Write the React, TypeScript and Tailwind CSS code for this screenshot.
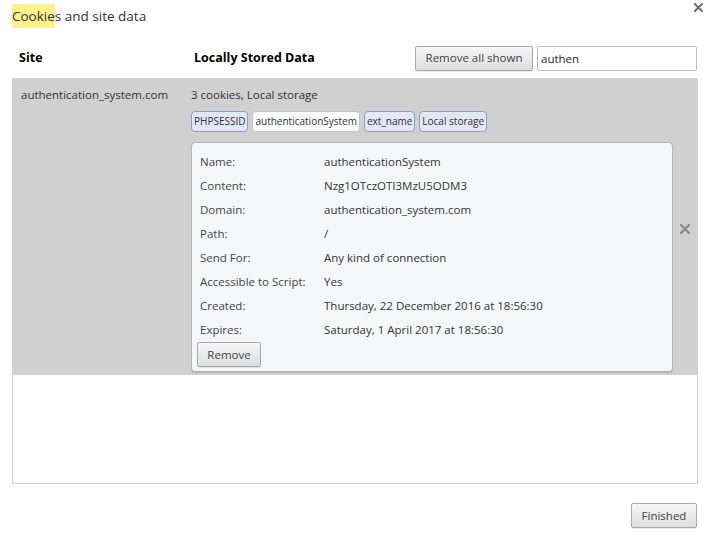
import React from 'react';

const FONT = { fontFamily: '"Open Sans", "Noto Sans", sans-serif' };

const chips = [
    { label: 'PHPSESSID', active: false },
    { label: 'authenticationSystem', active: true },
    { label: 'ext_name', active: false },
    { label: 'Local storage', active: false },
];

const details: [string, string][] = [
    ['Name:', 'authenticationSystem'],
    ['Content:', 'Nzg1OTczOTI3MzU5ODM3'],
    ['Domain:', 'authentication_system.com'],
    ['Path:', '/'],
    ['Send For:', 'Any kind of connection'],
    ['Accessible to Script:', 'Yes'],
    ['Created:', 'Thursday, 22 December 2016 at 18:56:30'],
    ['Expires:', 'Saturday, 1 April 2017 at 18:56:30'],
];

const btn = 'block h-[25px] rounded-[2px] border border-[#a8a8a8] bg-gradient-to-b from-[#f6f6f6] to-[#dedede] text-[11.5px] text-[#444] whitespace-nowrap shadow-[0_1px_0_rgba(0,0,0,0.08)]';

function CloseX({ color = '#6b6b6b', size = 9 }: { color?: string; size?: number }) {
    return (
        <svg width={size} height={size} viewBox="0 0 10 10">
            <path d="M1 1 L9 9 M9 1 L1 9" stroke={color} strokeWidth="2.2" strokeLinecap="square" />
        </svg>
    );
}

export default function App() {
    return (
        <div className="w-[710px] h-[539px] bg-white text-[#333] relative" style={FONT}>
            {/* title */}
            <div className="flex items-center h-[33px] px-[12px] pb-[2px] text-[13.5px] text-[#333]">
                <span className="bg-[#fdf08d] h-[24px] leading-[24px]">Cookie</span>
                <span className="leading-[24px]">s and site data</span>
            </div>
            <div className="absolute right-[7px] top-[3px]">
                <CloseX />
            </div>

            {/* header row */}
            <div className="flex items-center h-[45px] pl-[19px] pr-[13px] pt-[5px]">
                <div className="w-[175px] text-[12.5px] font-bold text-black">Site</div>
                <div className="flex-1 text-[12.5px] font-bold text-black">Locally Stored Data</div>
                <button className={`${btn} w-[118px]`} style={FONT}>Remove all shown</button>
                <input
                    readOnly
                    value="authen"
                    className="ml-[4px] w-[160px] h-[25px] border border-[#bdbdbd] rounded-[2px] px-[3px] text-[11.5px] text-[#222] outline-none"
                    style={FONT}
                />
            </div>

            {/* list */}
            <div className="mx-[12px] h-[406px] border border-[#d0d0d0] flex flex-col">
                <div className="bg-[#d0d0d0] flex h-[296px] pt-[8px]">
                    <div className="w-[178px] pl-[8px] text-[11.5px] leading-[16px]">authentication_system.com</div>
                    <div className="flex flex-col">
                        <div className="text-[11.5px] leading-[16px]">3 cookies, Local storage</div>
                        <div className="flex gap-[4px] mt-[8px]">
                            {chips.map((c) => (
                                <div
                                    key={c.label}
                                    className={`h-[21px] px-[2px] rounded-[4px] border text-[10px] leading-[19px] ${
                                        c.active ? 'bg-[#fbfcfd] border-[#c4c4c4]' : 'bg-[#e1e8f4] border-[#8c9fc4]'
                                    }`}
                                >
                                    {c.label}
                                </div>
                            ))}
                        </div>
                        <div className="mt-[10px] w-[482px] h-[230px] bg-[#f4f7f8] border border-[#b4b4b4] rounded-[4px] px-[5px] pt-[7px] shadow-[0_1px_0_rgba(0,0,0,0.12)]">
                            {details.map(([k, v]) => (
                                <div key={k} className="flex h-[24px] items-center text-[11.5px]">
                                    <div className="w-[127px] pl-[3px] text-[#444]">{k}</div>
                                    <div className="text-[#333]">{v}</div>
                                </div>
                            ))}
                            <button className={`${btn} w-[64px]`} style={FONT}>Remove</button>
                        </div>
                    </div>
                    <div className="flex-1 flex items-center justify-center pb-[4px]">
                        <CloseX color="#8a8a8a" size={10} />
                    </div>
                </div>
                <div className="flex-1" />
            </div>

            <div className="flex justify-end pr-[13px] pt-[19px]">
                <button className={`${btn} w-[66px]`} style={FONT}>Finished</button>
            </div>
        </div>
    );
}
